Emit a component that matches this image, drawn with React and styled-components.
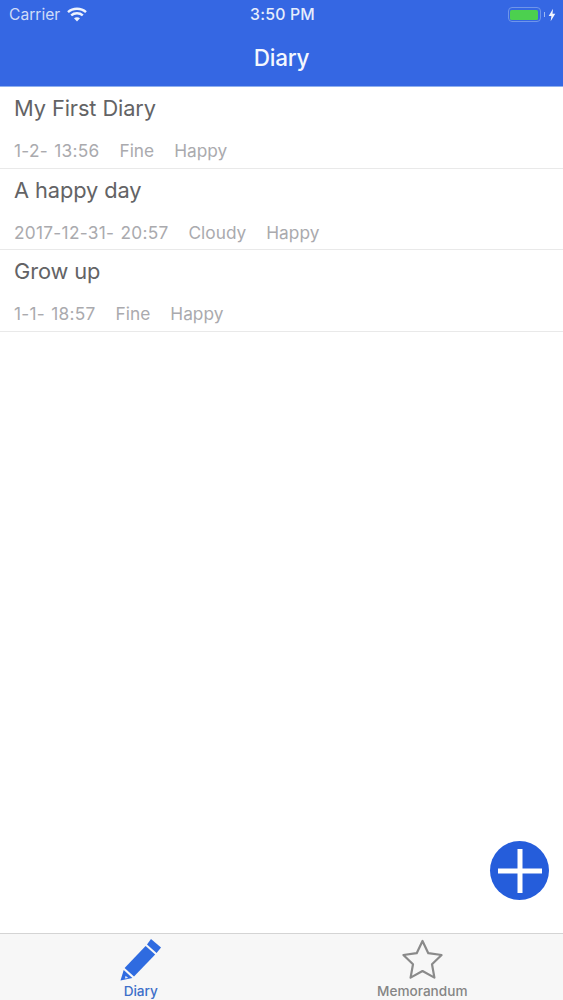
import React from 'react';
import styled, { createGlobalStyle } from 'styled-components';

const Global = createGlobalStyle`
  html, body { margin: 0; padding: 0; background: #fff; }
  * { box-sizing: border-box; }
`;
const Page = styled.div`
  position: relative; width: 563px; height: 1000px; display: flex; flex-direction: column;
  font-family: Inter, "Liberation Sans", sans-serif; overflow: hidden; background: #fff;
`;
const Header = styled.header`
  height: 87px; background: #3567e3; color: #fff; display: flex; flex-direction: column;
  border-bottom: 1px solid #8fb0ee;
`;
const StatusBar = styled.div`
  height: 29px; display: grid; grid-template-columns: 1fr auto 1fr; align-items: center; padding: 0 7px 0 9px;
  color: #dfe8fb;
`;
const StatusLeft = styled.div`display: flex; align-items: center; gap: 7px; font-size: 15.6px; color: #cfdcf8;`;
const StatusTime = styled.div`font-weight: 500; font-size: 15.8px; letter-spacing: 0.2px; color: #e6edfc;`;
const StatusRight = styled.div`display: flex; align-items: center; justify-content: flex-end; gap: 3px;`;
const BatteryShell = styled.div`
  width: 33px; height: 15px; border: 1.5px solid #6f95ea; border-radius: 4px; padding: 1.5px; display: flex;
`;
const BatteryFill = styled.div`flex: 1; background: #4cd04f; border-radius: 1.5px;`;
const BatteryNub = styled.div`width: 1.5px; height: 5px; background: #9db9f1;`;
const Title = styled.h1`
  margin: 0; flex: 1; display: flex; align-items: center; justify-content: center; padding-bottom: 1px;
  font-size: 22.5px; font-weight: 500; color: #f4f7fe; letter-spacing: -0.2px;
`;
const List = styled.main`flex: 1;`;
const Row = styled.article`
  height: 81.5px; padding: 7px 14px 0; border-bottom: 1px solid #e9e9e9; display: flex; flex-direction: column;
`;
const RowTitle = styled.div`font-size: 21.8px; line-height: 28px; color: #636365; letter-spacing: -0.1px;`;
const Meta = styled.div`margin-top: 17px; display: flex; gap: 20px; font-size: 17.3px; line-height: 24px; color: #aaaaae;`;
const MetaDate = styled.span`letter-spacing: 0.28px; word-spacing: 1px;`;
const Fab = styled.button`
  position: absolute; left: 490px; top: 841px; width: 59px; height: 59px; border: 0; padding: 0; border-radius: 50%;
  background: #255ddb; display: flex; align-items: center; justify-content: center;
`;
const TabBar = styled.nav`
  height: 67px; background: #f7f7f7; border-top: 1px solid #d4d4d4; display: grid; grid-template-columns: 1fr 1fr;
`;
const Tab = styled.div`
  display: flex; flex-direction: column; align-items: center; padding-top: 4px; font-size: 13.6px; font-weight: 500;
  line-height: 16px; color: ${p => (p.$active ? '#3d6fc9' : '#858585')};
  svg { display: block; height: 43px; margin-bottom: 2px; }
`;

const Wifi = () => (
  <svg width="20" height="15" viewBox="0 0 20 15">
    <path d="M1 5.2C5.9.6 14.1.6 19 5.2" fill="none" stroke="#eef3fd" strokeWidth="2.4" />
    <path d="M4.2 8.4c3.2-2.9 8.4-2.9 11.6 0" fill="none" stroke="#eef3fd" strokeWidth="2.4" />
    <path d="M7 11.2c1.7-1.3 4.3-1.3 6 0L10 14.4z" fill="#eef3fd" />
  </svg>
);
const Bolt = () => (
  <svg width="8" height="14" viewBox="0 0 9 14"><path d="M5.6 0 .8 8h3L3 14l5.2-8.4h-3.1z" fill="#f2f5fe" /></svg>
);
const Pencil = () => (
  <svg width="42" height="43" viewBox="0 0 42 43">
    <path d="M31 1 41 9.5 36.6 15 27 6.5z" fill="#2f6be0" />
    <path d="M25.6 8 35.2 16.6 14 38.5 4.6 30z" fill="#2f6be0" />
    <path d="M3.7 32 12.4 39.9 0.5 42.5z" fill="#2f6be0" />
    <path d="M5.6 37.8l2.6 2.1-3.4.7z" fill="#dbe6fa" />
  </svg>
);
const Star = () => (
  <svg width="43" height="43" viewBox="0 0 43 43">
    <path d="M21.5 3 27.3 15.2 40.6 17 31 26.2 33.4 39.6 21.5 33 9.6 39.6 12 26.2 2.4 17 15.7 15.2z"
      fill="none" stroke="#8a8a8a" strokeWidth="2.2" strokeLinejoin="round" />
  </svg>
);
const Plus = () => (
  <svg width="46" height="46" viewBox="0 0 46 46">
    <path d="M23 1v44M1 23h44" stroke="#fff" strokeWidth="5" />
  </svg>
);

const entries = [
  { title: 'My First Diary', date: '1-2- 13:56', weather: 'Fine', mood: 'Happy' },
  { title: 'A happy day', date: '2017-12-31- 20:57', weather: 'Cloudy', mood: 'Happy' },
  { title: 'Grow up', date: '1-1- 18:57', weather: 'Fine', mood: 'Happy' },
];

export default function App() {
  return (
    <Page>
      <Global />
      <Header>
        <StatusBar>
          <StatusLeft>Carrier <Wifi /></StatusLeft>
          <StatusTime>3:50 PM</StatusTime>
          <StatusRight>
            <BatteryShell><BatteryFill /></BatteryShell>
            <BatteryNub />
            <Bolt />
          </StatusRight>
        </StatusBar>
        <Title>Diary</Title>
      </Header>
      <List>
        {entries.map(e => (
          <Row key={e.title}>
            <RowTitle>{e.title}</RowTitle>
            <Meta><MetaDate>{e.date}</MetaDate><span>{e.weather}</span><span>{e.mood}</span></Meta>
          </Row>
        ))}
      </List>
      <Fab aria-label="Add"><Plus /></Fab>
      <TabBar>
        <Tab $active><Pencil />Diary</Tab>
        <Tab><Star />Memorandum</Tab>
      </TabBar>
    </Page>
  );
}
